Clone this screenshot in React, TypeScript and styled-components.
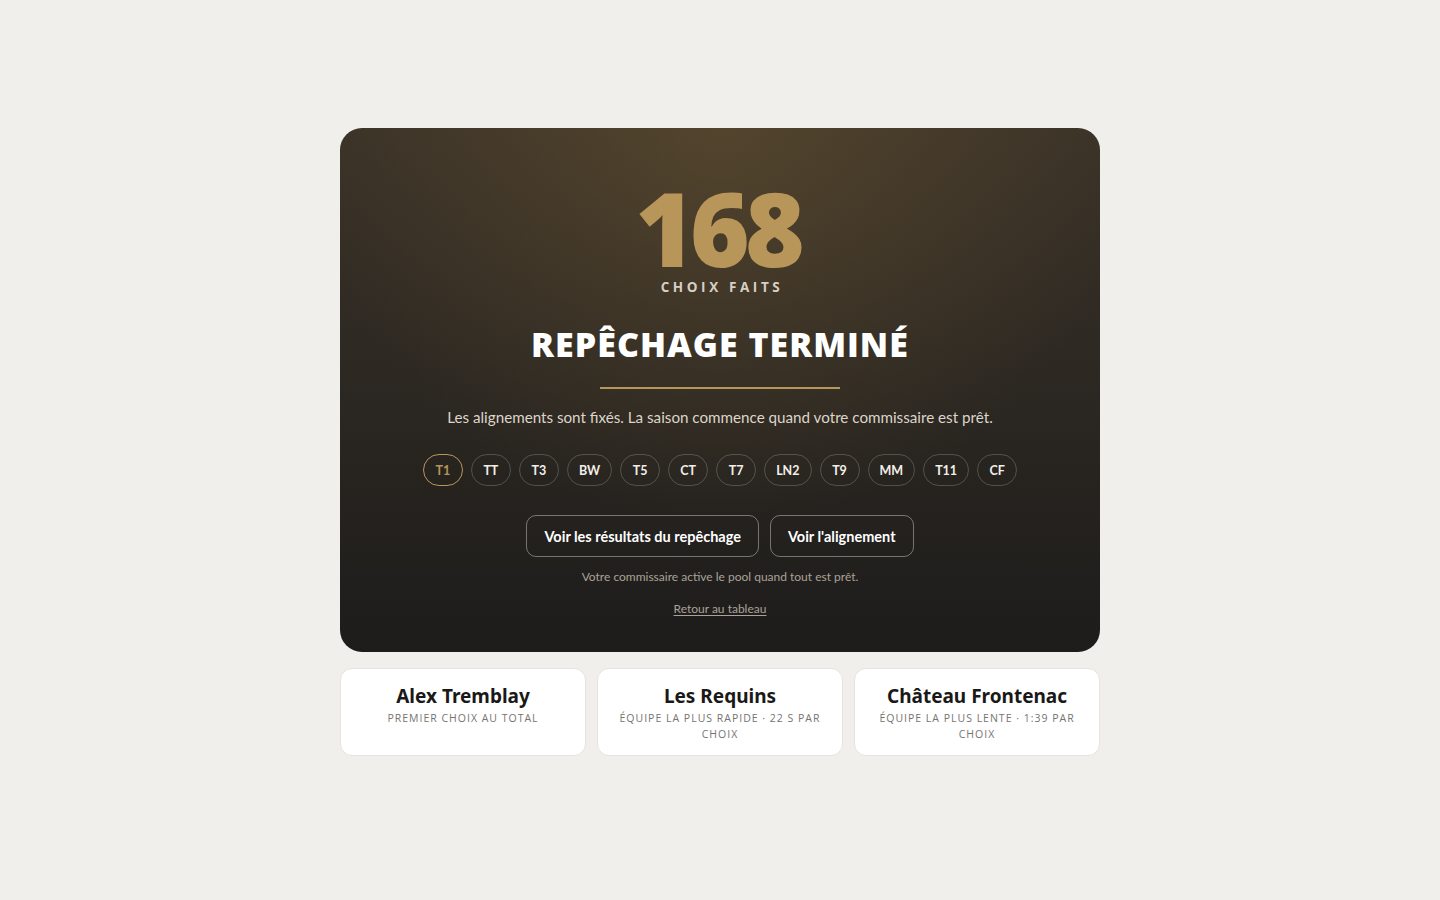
import React from 'react'
import styled, { createGlobalStyle } from 'styled-components'

const GlobalStyle = createGlobalStyle`
  html, body {
    margin: 0;
    padding: 0;
    background: #f0efeb;
    font-family: Lato, "Noto Sans", sans-serif;
  }
  * {
    box-sizing: border-box;
  }
`

const Page = styled.div`
  display: flex;
  flex-direction: column;
  align-items: center;
  padding-top: 128px;
  min-height: 100vh;
`

const Column = styled.div`
  width: 760px;
  display: flex;
  flex-direction: column;
  gap: 16px;
`

const Hero = styled.section`
  border-radius: 22px;
  padding: 50px 40px 35px;
  display: flex;
  flex-direction: column;
  align-items: center;
  color: #fff;
  background:
    radial-gradient(ellipse 55% 75% at 50% 0%, rgba(110, 88, 50, 0.48), rgba(110, 88, 50, 0) 100%),
    linear-gradient(180deg, #3a3228 0%, #2a2621 55%, #1d1c1b 100%);
`

const Count = styled.div`
  font-family: "Open Sans", sans-serif;
  font-weight: 800;
  font-size: 102px;
  line-height: 100px;
  letter-spacing: -5px;
  padding-right: 5px;
  color: #b89558;
`

const CountLabel = styled.div`
  font-family: "Open Sans", sans-serif;
  font-size: 13.5px;
  line-height: 18px;
  font-weight: 700;
  letter-spacing: 3.6px;
  color: #d6cfc4;
  padding-left: 4px;
`

const Title = styled.h1`
  margin: 26px 0 0;
  font-family: "Open Sans", sans-serif;
  font-weight: 800;
  font-size: 34px;
  line-height: 44px;
  letter-spacing: 1px;
  color: #fff;
`

const Rule = styled.div`
  width: 240px;
  height: 2px;
  margin-top: 21px;
  background: #b89558;
`

const Lead = styled.p`
  margin: 17px 0 0;
  font-size: 15.2px;
  line-height: 22px;
  color: #dcd5ca;
`

const Chips = styled.div`
  display: flex;
  gap: 8px;
  margin-top: 26px;
`

const Chip = styled.span<{ $active?: boolean }>`
  min-width: 40px;
  height: 32px;
  padding: 0 11px;
  border-radius: 16px;
  display: flex;
  align-items: center;
  justify-content: center;
  font-size: 12.5px;
  font-weight: 700;
  color: ${(p) => (p.$active ? '#b89558' : '#f2efe9')};
  border: 1px solid ${(p) => (p.$active ? '#b89558' : 'rgba(255, 255, 255, 0.2)')};
`

const Actions = styled.div`
  display: flex;
  gap: 11px;
  margin-top: 29px;
`

const Button = styled.button`
  height: 42px;
  padding: 0 17px;
  border-radius: 10px;
  background: transparent;
  border: 1px solid rgba(255, 255, 255, 0.38);
  color: #fff;
  font-family: Lato, sans-serif;
  font-size: 14.5px;
  font-weight: 700;
  cursor: pointer;
`

const Note = styled.p`
  margin: 12px 0 0;
  font-size: 12px;
  line-height: 16px;
  color: #aaa298;
`

const BackLink = styled.a`
  margin-top: 16px;
  font-size: 12px;
  line-height: 16px;
  color: #aaa298;
  text-decoration: underline;
  text-underline-offset: 2px;
  cursor: pointer;
`

const Stats = styled.div`
  display: grid;
  grid-template-columns: repeat(3, 1fr);
  gap: 11px;
`

const StatCard = styled.div`
  background: #fff;
  border: 1px solid #e6e3de;
  border-radius: 12px;
  height: 88px;
  padding: 14px 16px;
  display: flex;
  flex-direction: column;
  align-items: center;
  text-align: center;
`

const StatName = styled.div`
  font-family: "Noto Sans", sans-serif;
  font-size: 19px;
  font-weight: 700;
  line-height: 26px;
  color: #1a1917;
`

const StatMeta = styled.div`
  margin-top: 1px;
  font-family: "Open Sans", sans-serif;
  font-size: 10.5px;
  line-height: 16px;
  letter-spacing: 1px;
  text-transform: uppercase;
  color: #767370;
`

const teams = ['T1', 'TT', 'T3', 'BW', 'T5', 'CT', 'T7', 'LN2', 'T9', 'MM', 'T11', 'CF']

const stats = [
  { name: 'Alex Tremblay', meta: 'Premier choix au total' },
  { name: 'Les Requins', meta: 'Équipe la plus rapide · 22 s par choix' },
  { name: 'Château Frontenac', meta: 'Équipe la plus lente · 1:39 par choix' },
]

export default function App() {
  return (
    <Page>
      <GlobalStyle />
      <Column>
        <Hero>
          <Count>168</Count>
          <CountLabel>CHOIX FAITS</CountLabel>
          <Title>REPÊCHAGE TERMINÉ</Title>
          <Rule />
          <Lead>Les alignements sont fixés. La saison commence quand votre commissaire est prêt.</Lead>
          <Chips>
            {teams.map((t, i) => (
              <Chip key={t} $active={i === 0}>
                {t}
              </Chip>
            ))}
          </Chips>
          <Actions>
            <Button>Voir les résultats du repêchage</Button>
            <Button>Voir l'alignement</Button>
          </Actions>
          <Note>Votre commissaire active le pool quand tout est prêt.</Note>
          <BackLink>Retour au tableau</BackLink>
        </Hero>
        <Stats>
          {stats.map((s) => (
            <StatCard key={s.name}>
              <StatName>{s.name}</StatName>
              <StatMeta>{s.meta}</StatMeta>
            </StatCard>
          ))}
        </Stats>
      </Column>
    </Page>
  )
}
